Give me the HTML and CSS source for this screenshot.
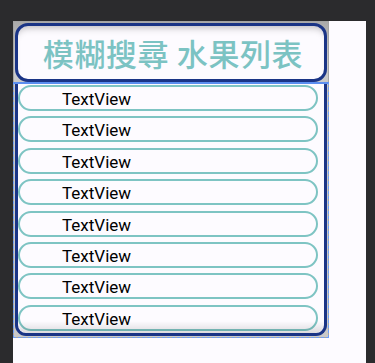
FILE: index.html
```html
<!DOCTYPE html>
<html>

<head>
  <meta charset="UTF-8">
  <title>模糊搜尋 水果列表</title>
  <link rel="stylesheet" href="styles.css">
</head>

<body>
  <div class="screen">
    <div class="panel">
      <div class="header">
        <h1>模糊搜尋 水果列表</h1>
      </div>
      <div class="selected">
        <div class="list">
          <div class="row">TextView</div>
          <div class="row">TextView</div>
          <div class="row">TextView</div>
          <div class="row">TextView</div>
          <div class="row">TextView</div>
          <div class="row">TextView</div>
          <div class="row">TextView</div>
          <div class="row">TextView</div>
        </div>
      </div>
    </div>
  </div>
</body>

</html>
```

FILE: styles.css
```css
body {
  margin: 0;
  background-color: #2b2b2d;
  font-family: Roboto, "Noto Sans", sans-serif;
}

.screen {
  margin: 21px 0 0 13px;
  width: 353px;
  height: 342px;
  background-color: #fdfbff;
}

.panel {
  width: 316px;
  background: linear-gradient(#a9a9a9, #c9c9c9 40px, #c9c9c9);
  box-shadow: inset 0 0 0 1px #a4a4a4;
  padding-top: 2px;
}

.header {
  margin: 0 2px;
  height: 59px;
  box-sizing: border-box;
  border: 3px solid #1a3486;
  border-radius: 13px;
  background-color: #fdfbff;
  box-shadow: inset 0 7px 7px -5px rgba(0, 0, 0, 0.25);
  display: flex;
  align-items: center;
  justify-content: center;
}

.header h1 {
  margin: 0 0 0 4px;
  font-family: "Noto Sans CJK TC", sans-serif;
  font-size: 31px;
  font-weight: 500;
  color: #7cc3c3;
  letter-spacing: 0.6px;
}

.selected {
  border-top: 2px solid #5b8ef0;
  border-left: 1px dashed #6f9ff5;
  border-right: 1px dashed #6f9ff5;
  border-bottom: 1px dashed #6f9ff5;
  padding: 0 1px 1px;
}

.list {
  position: relative;
  border: 3px solid #1a3486;
  border-top: none;
  border-radius: 0 0 11px 11px;
  background-color: #fdfbff;
  padding: 1px 6px 2px 0;
  display: flex;
  flex-direction: column;
  gap: 5.4px;
}

.list::after {
  content: "";
  position: absolute;
  left: 0;
  right: 0;
  bottom: 0;
  height: 12px;
  border-radius: 0 0 9px 9px;
  background: linear-gradient(rgba(0, 0, 0, 0), rgba(0, 0, 0, 0.13));
}

.row {
  height: 26px;
  box-sizing: border-box;
  border: 2.5px solid #7ec4c3;
  border-radius: 13px;
  padding-left: 42px;
  font-size: 17px;
  line-height: 24px;
  color: #000;
}
```
